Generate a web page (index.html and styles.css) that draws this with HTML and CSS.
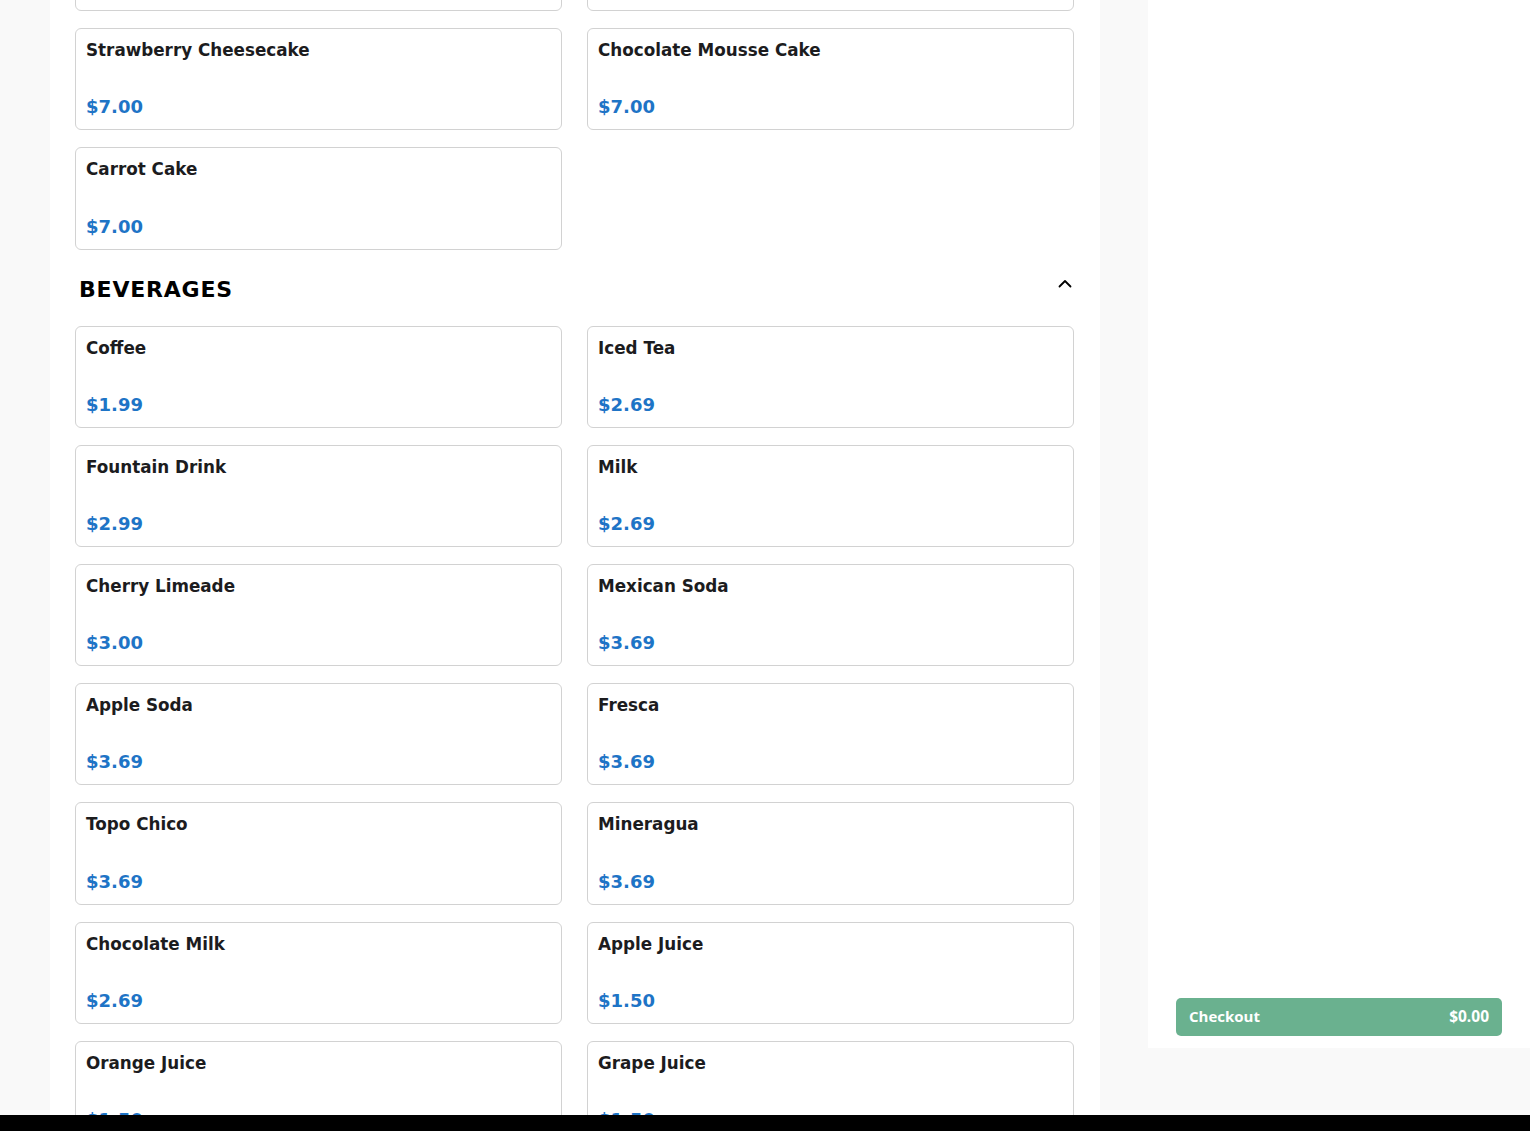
FILE: index.html
```html
<!DOCTYPE html>
<html lang="en">
<head>
<meta charset="utf-8">
<title>Menu</title>
<link rel="stylesheet" href="styles.css">
</head>
<body>
<div class="app">
  <main class="menu">
    <div class="menu-inner">
      <section class="section">
        <div class="grid">
          <div class="card"><div class="name">Tres Leches Cake</div><div class="price">$7.00</div></div>
          <div class="card"><div class="name">Cheesecake</div><div class="price">$7.00</div></div>
          <div class="card"><div class="name">Strawberry Cheesecake</div><div class="price">$7.00</div></div>
          <div class="card"><div class="name">Chocolate Mousse Cake</div><div class="price">$7.00</div></div>
          <div class="card"><div class="name">Carrot Cake</div><div class="price">$7.00</div></div>
        </div>
      </section>
      <section class="section">
        <div class="section-head">
          <h2 class="section-title">BEVERAGES</h2>
          <svg class="chevron" width="16" height="16" viewBox="0 0 16 16" aria-hidden="true"><path d="M2.5 10.5 L8 5 L13.5 10.5" fill="none" stroke="#000" stroke-width="1.8" stroke-linecap="round" stroke-linejoin="round"/></svg>
        </div>
        <div class="grid">
          <div class="card"><div class="name">Coffee</div><div class="price">$1.99</div></div>
          <div class="card"><div class="name">Iced Tea</div><div class="price">$2.69</div></div>
          <div class="card"><div class="name">Fountain Drink</div><div class="price">$2.99</div></div>
          <div class="card"><div class="name">Milk</div><div class="price">$2.69</div></div>
          <div class="card"><div class="name">Cherry Limeade</div><div class="price">$3.00</div></div>
          <div class="card"><div class="name">Mexican Soda</div><div class="price">$3.69</div></div>
          <div class="card"><div class="name">Apple Soda</div><div class="price">$3.69</div></div>
          <div class="card"><div class="name">Fresca</div><div class="price">$3.69</div></div>
          <div class="card"><div class="name">Topo Chico</div><div class="price">$3.69</div></div>
          <div class="card"><div class="name">Mineragua</div><div class="price">$3.69</div></div>
          <div class="card"><div class="name">Chocolate Milk</div><div class="price">$2.69</div></div>
          <div class="card"><div class="name">Apple Juice</div><div class="price">$1.50</div></div>
          <div class="card"><div class="name">Orange Juice</div><div class="price">$1.50</div></div>
          <div class="card"><div class="name">Grape Juice</div><div class="price">$1.50</div></div>
        </div>
      </section>
    </div>
  </main>
  <aside class="cart">
    <button class="checkout" type="button"><span>Checkout</span><span>$0.00</span></button>
  </aside>
</div>
<div class="bottom-bar"></div>
</body>
</html>
```

FILE: styles.css
```css
html, body {
  margin: 0;
  padding: 0;
  background: #f9f9f9;
  font-family: "DejaVu Sans", sans-serif;
  color: #1c1c1e;
}

.app {
  display: flex;
  height: 1115px;
  overflow: hidden;
  padding-left: 50px;
  background: #f9f9f9;
}

.menu {
  flex: none;
  width: 1050px;
  box-sizing: border-box;
  padding: 0 26px 0 25px;
  background: #fff;
}

.menu-inner {
  margin-top: -91px;
}

.grid {
  display: grid;
  grid-template-columns: 1fr 1fr;
  column-gap: 25px;
  row-gap: 17px;
}

.card {
  height: 102.2px;
  box-sizing: border-box;
  border: 1px solid #d2d2d2;
  border-radius: 6px;
  padding: 11px 10px 11px;
  display: flex;
  flex-direction: column;
  justify-content: space-between;
  background: #fff;
}

.name {
  font-size: 16.8px;
  font-weight: bold;
  line-height: 20px;
  color: #1c1c1e;
}

.price {
  font-size: 18px;
  font-weight: bold;
  line-height: 22px;
  color: #1e74c6;
}

.section-head {
  display: flex;
  justify-content: space-between;
  align-items: flex-start;
  height: 42px;
  margin: 19px 0 15px;
  padding: 0 1px 0 4px;
}

.section-title {
  margin: 0;
  font-size: 22px;
  line-height: 42px;
  font-weight: bold;
  letter-spacing: 0.8px;
  color: #000;
}

.chevron {
  margin-top: 7px;
  flex: none;
}

.cart {
  flex: 1;
  margin-left: 48px;
  height: 1048px;
  box-sizing: border-box;
  background: #fff;
  display: flex;
  flex-direction: column;
  justify-content: flex-end;
  padding: 0 28px 12px;
}

.checkout {
  display: flex;
  justify-content: space-between;
  align-items: center;
  height: 38px;
  padding: 0 13px 2px;
  border: none;
  border-radius: 5px;
  background: #6ab18f;
  color: #fff;
  font-family: "Open Sans", sans-serif;
  font-weight: 700;
  font-size: 15px;
  cursor: pointer;
}

.checkout span:last-child {
  font-size: 15.5px;
}

.bottom-bar {
  height: 16px;
  background: #000;
}
```
